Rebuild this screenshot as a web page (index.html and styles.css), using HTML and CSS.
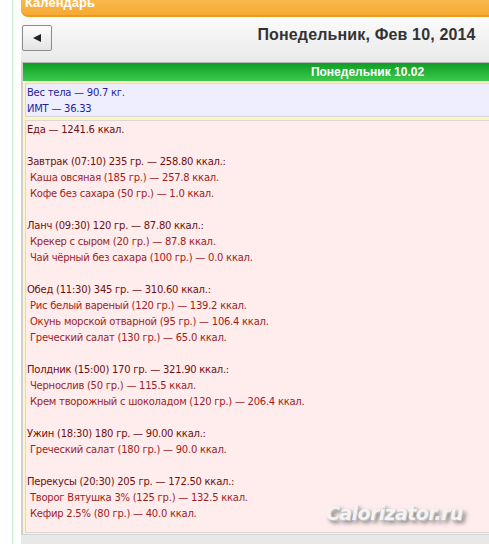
FILE: index.html
```html
<!DOCTYPE html>
<html lang="ru">
<head>
<meta charset="utf-8">
<title>Календарь</title>
<link rel="stylesheet" href="styles.css">
</head>
<body>
<div class="page">
  <div class="panel">
    <div class="cal-header"><span class="cal-title">Календарь</span></div>
    <div class="toolbar">
      <button class="prev" type="button"><span class="tri"></span></button>
      <div class="date-title">Понедельник, Фев 10, 2014</div>
      <div></div>
    </div>
    <div class="day">
      <div class="day-head">Понедельник 10.02</div>
      <div class="cell">
        <div class="box body-box">
          <div>Вес тела — 90.7 кг.</div>
          <div>ИМТ — 36.33</div>
        </div>
      </div>
      <div class="cell">
        <div class="box food-box">
          <div class="hd">Еда — 1241.6 ккал.</div>
          <div class="gap"></div>
          <div class="hd">Завтрак (07:10) 235 гр. — 258.80 ккал.:</div>
          <div class="it">Каша овсяная (185 гр.) — 257.8 ккал.</div>
          <div class="it">Кофе без сахара (50 гр.) — 1.0 ккал.</div>
          <div class="gap"></div>
          <div class="hd">Ланч (09:30) 120 гр. — 87.80 ккал.:</div>
          <div class="it">Крекер с сыром (20 гр.) — 87.8 ккал.</div>
          <div class="it">Чай чёрный без сахара (100 гр.) — 0.0 ккал.</div>
          <div class="gap"></div>
          <div class="hd">Обед (11:30) 345 гр. — 310.60 ккал.:</div>
          <div class="it">Рис белый вареный (120 гр.) — 139.2 ккал.</div>
          <div class="it">Окунь морской отварной (95 гр.) — 106.4 ккал.</div>
          <div class="it">Греческий салат (130 гр.) — 65.0 ккал.</div>
          <div class="gap"></div>
          <div class="hd">Полдник (15:00) 170 гр. — 321.90 ккал.:</div>
          <div class="it">Чернослив (50 гр.) — 115.5 ккал.</div>
          <div class="it">Крем творожный с шоколадом (120 гр.) — 206.4 ккал.</div>
          <div class="gap"></div>
          <div class="hd">Ужин (18:30) 180 гр. — 90.00 ккал.:</div>
          <div class="it">Греческий салат (180 гр.) — 90.0 ккал.</div>
          <div class="gap"></div>
          <div class="hd">Перекусы (20:30) 205 гр. — 172.50 ккал.:</div>
          <div class="it">Творог Вятушка 3% (125 гр.) — 132.5 ккал.</div>
          <div class="it">Кефир 2.5% (80 гр.) — 40.0 ккал.</div>
          <div class="gap last"></div>
        </div>
      </div>
    </div>
    <div class="panel-foot"></div>
  </div>
</div>
<div class="watermark">Calorizator.ru</div>
</body>
</html>
```
FILE: styles.css
```css
html, body {
  margin: 0;
  padding: 0;
  overflow: hidden;
  background: #ffffff;
}
body {
  width: 489px;
  height: 544px;
  position: relative;
  font-family: "Liberation Sans", Arial, sans-serif;
}
.page {
  margin-left: 12px;
  border-left: 1px solid #c8f0c8;
  padding-left: 8px;
  height: 544px;
  width: 800px;
}
.panel {
  width: 691px;
}
.cal-header {
  height: 15px;
  background: linear-gradient(#f9b84c, #f6a935);
  border-bottom: 2px solid #f29a1d;
  border-bottom-left-radius: 7px;
  overflow: hidden;
}
.cal-title {
  display: block;
  margin-top: -5px;
  padding-left: 4px;
  color: #ffffff;
  font-weight: bold;
  font-size: 13px;
  line-height: 16px;
}
.toolbar {
  height: 45px;
  background: linear-gradient(#fbfbfb, #e9e9e9);
  display: grid;
  grid-template-columns: 1fr auto 1fr;
  align-items: start;
}
.prev {
  justify-self: start;
  margin: 8px 0 0 1px;
  width: 30px;
  height: 26px;
  padding: 0;
  border: 1px solid #8c8c8c;
  border-radius: 2px;
  background: linear-gradient(#fdfdfd, #e4e4e4);
  display: flex;
  align-items: center;
  justify-content: center;
}
.tri {
  width: 0;
  height: 0;
  border-top: 4px solid transparent;
  border-bottom: 4px solid transparent;
  border-right: 8px solid #222;
  margin-left: -1px;
}
.date-title {
  margin-top: 9px;
  font-size: 16px;
  font-weight: bold;
  color: #333333;
  line-height: 18px;
  letter-spacing: 0.15px;
}
.day {
  border-top: 1px solid #b8b8b8;
  border-left: 2px solid #cfcfcf;
}
.day-head {
  height: 18px;
  line-height: 18px;
  background: linear-gradient(#0f9e24, #3ccb4b);
  color: #ffffff;
  font-weight: bold;
  font-size: 12px;
  text-align: center;
}
.cell {
  background: #fff5c0;
  padding: 2px 2px 1px 2px;
}
.box {
  border: 1px solid #d8d8d8;
  font-family: "DejaVu Sans", Verdana, sans-serif;
  font-size: 10px;
  line-height: 16px;
  letter-spacing: -0.25px;
  padding-left: 1px;
}
.body-box {
  background: #eeeeff;
  color: #1e1ea0;
}
.body-box div:first-child {
  margin-top: 1px;
}
.body-box div:last-child {
  margin-bottom: -1px;
}
.food-box {
  background: #ffecec;
  color: #8a1a1a;
  padding-top: 1px;
}
.hd {
  color: #701010;
}
.it {
  padding-left: 3px;
  color: #a01e1e;
}
.gap {
  height: 16px;
}
.gap.last {
  height: 10px;
}
.panel-foot {
  height: 12px;
  background: #e8e8e8;
  border-top: 1px solid #d4d4d4;
}
.watermark {
  position: absolute;
  left: 326px;
  top: 502px;
  font-family: "DejaVu Sans", Verdana, sans-serif;
  font-weight: bold;
  font-style: italic;
  font-size: 19px;
  letter-spacing: -0.6px;
  color: #f4f4f4;
  text-shadow: 1px 1px 0 #c4c4c4, 3px 3px 4px #6f6f6f;
}
```
